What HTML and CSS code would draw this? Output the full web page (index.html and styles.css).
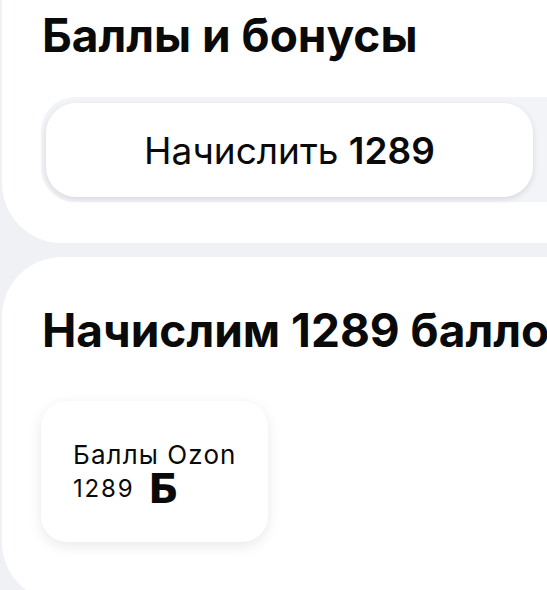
FILE: index.html
```html
<!DOCTYPE html>
<html lang="ru">
<head>
    <meta charset="UTF-8">
    <title>Баллы и бонусы</title>
    <link rel="stylesheet" href="styles.css">
</head>
<body>
    <div class="cards">

        <!-- Bonus block -->
        <div class="card card-top">
            <h2 class="card-title">Баллы и бонусы</h2>
            <div class="action-strip">
                <button class="accrue-button">Начислить <b>1289</b></button>
            </div>
        </div>

        <!-- Accrual block -->
        <div class="card card-bottom">
            <h2 class="card-title">Начислим 1289 баллов</h2>
            <div class="points-tile">
                <div class="points-name">Баллы Ozon</div>
                <div class="points-value">1289 <span class="points-sign">Б</span></div>
            </div>
        </div>

    </div>
</body>
</html>
```

FILE: styles.css
```css
body {
    margin: 0;
    width: 547px;
    height: 590px;
    overflow: hidden;
    background-color: #f0f1f4;
    font-family: Inter, "Liberation Sans", Arial, sans-serif;
    color: #0a0a0a;
}
.cards {
    display: flex;
    flex-direction: column;
    gap: 14px;
    width: 680px;
    margin-top: -60px;
    margin-left: 2px;
}
.card {
    background-color: #fff;
    border-radius: 60px;
    padding: 0 0 0 40px;
}
.card-top {
    padding-top: 68px;
    padding-bottom: 41px;
}
.card-bottom {
    padding-top: 46px;
    padding-bottom: 60px;
}
.card-title {
    margin: 0;
    font-size: 46px;
    line-height: 54px;
    font-weight: 700;
    white-space: nowrap;
}
.card-top .card-title {
    margin-bottom: 35px;
}
.card-bottom .card-title {
    margin-bottom: 44px;
}
.action-strip {
    background-color: #f3f4f7;
    border-radius: 34px 0 0 34px;
    padding: 6px 0 5px 5px;
    margin-left: -1px;
}
.accrue-button {
    display: block;
    width: 487px;
    height: 94px;
    border: none;
    border-radius: 30px;
    background-color: #fff;
    box-shadow: 0 2px 6px rgba(0, 0, 0, 0.12);
    font-family: inherit;
    font-size: 37px;
    font-weight: 400;
    color: #0a0a0a;
    cursor: pointer;
}
.accrue-button b {
    font-weight: 600;
}
.points-tile {
    width: 195px;
    height: 141px;
    margin-left: -1px;
    padding-left: 32px;
    box-sizing: content-box;
    border-radius: 26px;
    background-color: #fff;
    box-shadow: 0 4px 14px rgba(0, 0, 0, 0.09);
    display: flex;
    flex-direction: column;
    justify-content: center;
}
.points-name {
    font-size: 26px;
    line-height: 34px;
    letter-spacing: 1.1px;
}
.points-value {
    display: flex;
    align-items: center;
    height: 34px;
    font-size: 24px;
    letter-spacing: 1.8px;
}
.points-sign {
    font-family: "DejaVu Sans", sans-serif;
    font-size: 40px;
    font-weight: 700;
    margin-left: 14px;
}
```
